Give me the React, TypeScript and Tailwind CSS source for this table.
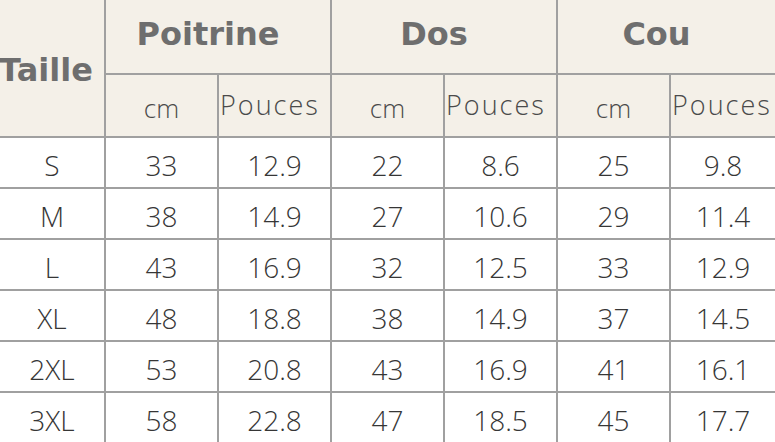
const rows = [
  ['S', '33', '12.9', '22', '8.6', '25', '9.8'],
  ['M', '38', '14.9', '27', '10.6', '29', '11.4'],
  ['L', '43', '16.9', '32', '12.5', '33', '12.9'],
  ['XL', '48', '18.8', '38', '14.9', '37', '14.5'],
  ['2XL', '53', '20.8', '43', '16.9', '41', '16.1'],
  ['3XL', '58', '22.8', '47', '18.5', '45', '17.7'],
];

const head = "font-['DejaVu_Sans',sans-serif] font-bold text-[32px] text-[#6e6e6e]";
const body = "font-['Open_Sans',sans-serif] font-light text-[28px] text-[#363636]";

export default function App() {
  return (
    <div className="h-[442px] w-[775px] overflow-hidden bg-white">
      <div className="grid grid-cols-[104px_111px_111px_111px_111px_111px_1fr] grid-rows-[73px_61px_repeat(6,49px)] gap-[2px] bg-[#a0a0a0]">
        {/* header */}
        <div className={`row-span-2 flex items-center justify-center bg-[#f4f0e8] pt-1 pr-3 text-[31px] ${head}`}>Taille</div>
        {['Poitrine', 'Dos', 'Cou'].map((t) => (
          <div key={t} className={`col-span-2 flex items-center justify-center bg-[#f4f0e8] pb-1.5 pr-5 ${head}`}>
            {t}
          </div>
        ))}
        {[0, 1, 2].map((i) => [
          <div key={`cm${i}`} className="flex items-center justify-center bg-[#f4f0e8] pt-1.5 font-['Open_Sans',sans-serif] text-[26px] font-light text-[#4a4a4a]">
            cm
          </div>,
          <div key={`po${i}`} className="flex items-center justify-start bg-[#f4f0e8] pl-px font-['Open_Sans',sans-serif] text-[27px] font-light tracking-[2px] text-[#4a4a4a]">
            Pouces
          </div>,
        ])}

        {/* body */}
        {rows.map((r) =>
          r.map((v, j) => (
            <div key={`${r[0]}-${j}`} className={`flex items-center justify-center bg-white pt-1 ${body}`}>
              {v}
            </div>
          ))
        )}
      </div>
    </div>
  );
}
